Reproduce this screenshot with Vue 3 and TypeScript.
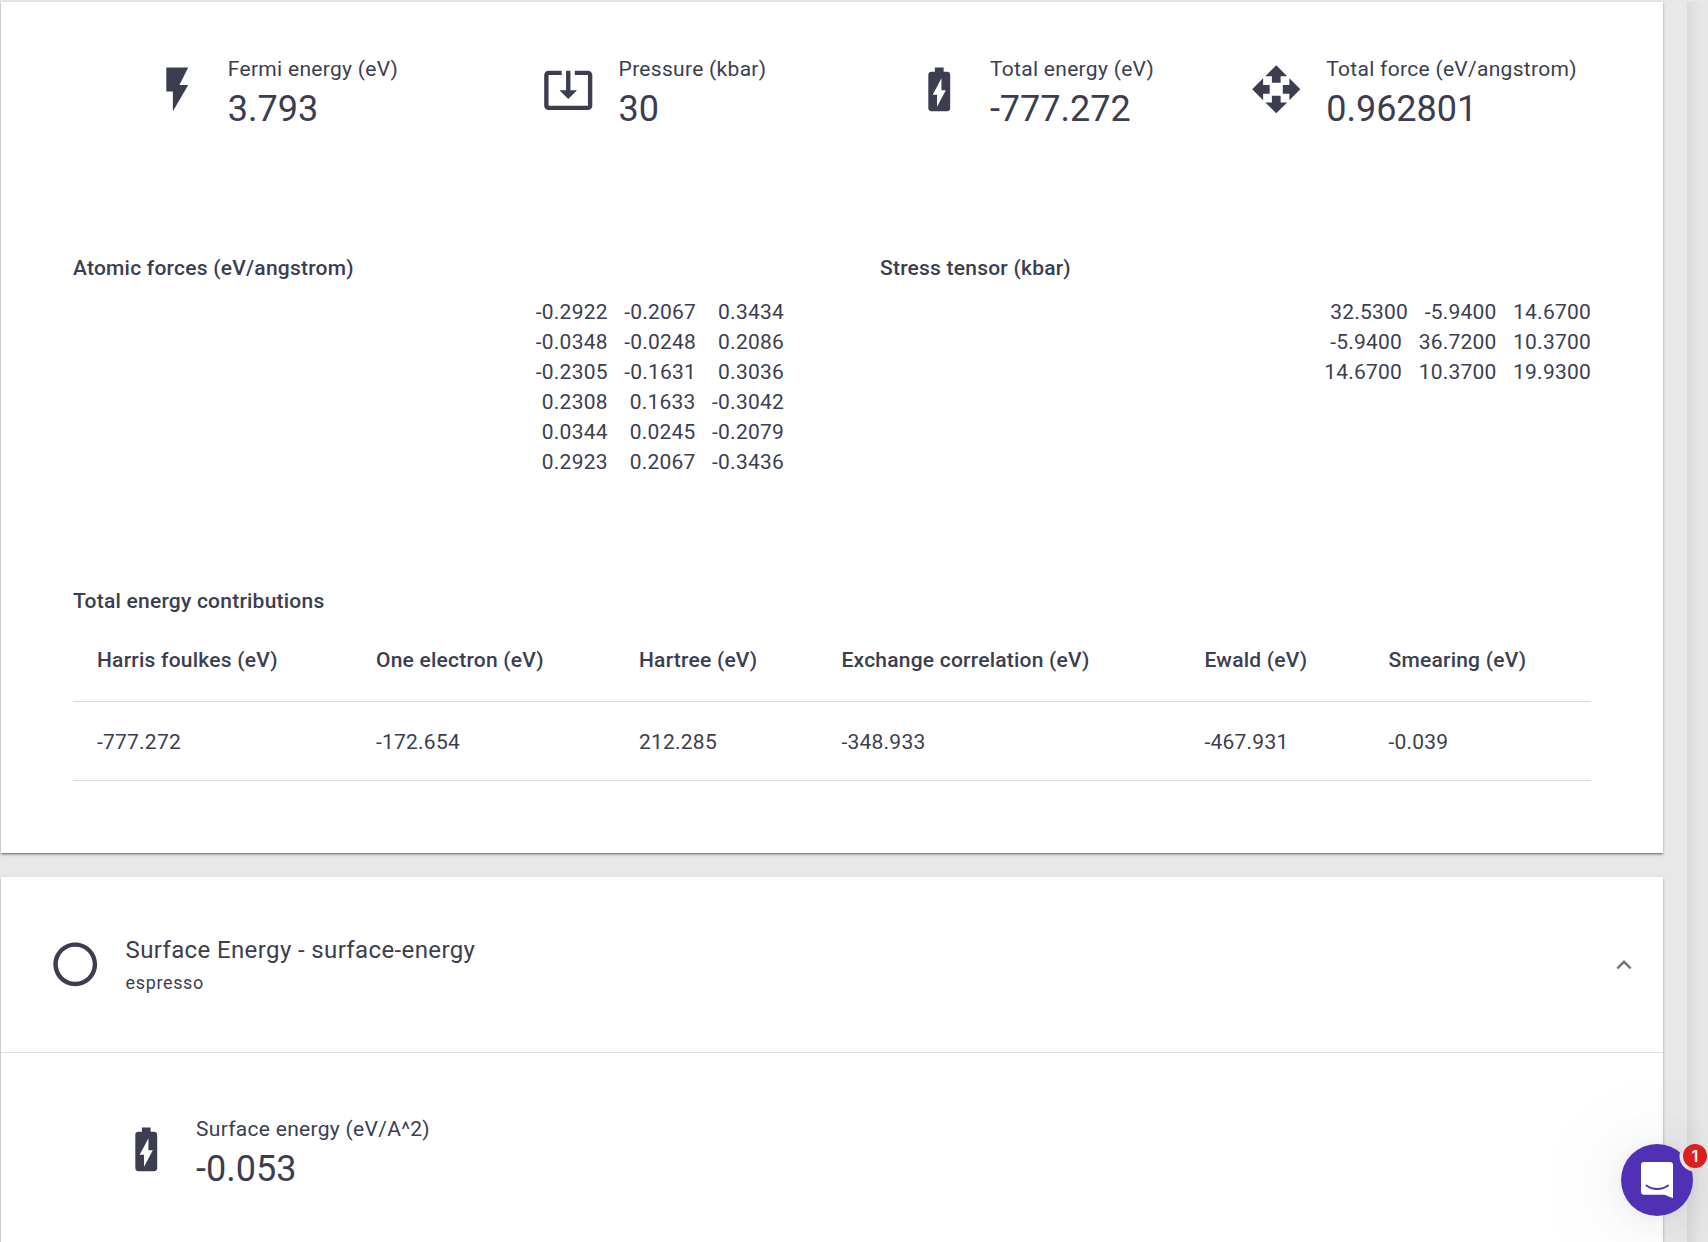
<script setup lang="ts">
interface Stat {
  label: string
  value: string
  icon: string
}

const icons = {
  bolt: 'M7 2v11h3v9l7-12h-4l4-8z',
  pressure:
    'M12 16.5l4-4h-3v-9h-2v9H8l4 4zm9-13h-6v1.99h6v14.03H3V5.49h6V3.5H3c-1.1 0-2 .9-2 2v14c0 1.1.9 2 2 2h18c1.1 0 2-.9 2-2v-14c0-1.1-.9-2-2-2z',
  battery:
    'M15.67 4H14V2h-4v2H8.33C7.6 4 7 4.6 7 5.33v15.33C7 21.4 7.6 22 8.33 22h7.33c.74 0 1.34-.6 1.34-1.33V5.33C17 4.6 16.4 4 15.67 4zM11 20v-5.5H9L13 7v5.5h2L11 20z',
  force:
    'M10 9h4V6h3l-5-5-5 5h3v3zm-1 1H6V7l-5 5 5 5v-3h3v-4zm14 2l-5-5v3h-3v4h3v3l5-5zm-9 3h-4v3H7l5 5 5-5h-3v-3z',
}

const stats: Stat[] = [
  { label: 'Fermi energy (eV)', value: '3.793', icon: icons.bolt },
  { label: 'Pressure (kbar)', value: '30', icon: icons.pressure },
  { label: 'Total energy (eV)', value: '-777.272', icon: icons.battery },
  { label: 'Total force (eV/angstrom)', value: '0.962801', icon: icons.force },
]

const surface: Stat = { label: 'Surface energy (eV/A^2)', value: '-0.053', icon: icons.battery }

const matrices: { title: string; rows: number[][] }[] = [
  {
    title: 'Atomic forces (eV/angstrom)',
    rows: [
      [-0.2922, -0.2067, 0.3434],
      [-0.0348, -0.0248, 0.2086],
      [-0.2305, -0.1631, 0.3036],
      [0.2308, 0.1633, -0.3042],
      [0.0344, 0.0245, -0.2079],
      [0.2923, 0.2067, -0.3436],
    ],
  },
  {
    title: 'Stress tensor (kbar)',
    rows: [
      [32.53, -5.94, 14.67],
      [-5.94, 36.72, 10.37],
      [14.67, 10.37, 19.93],
    ],
  },
]

const contributions: { name: string; value: string }[] = [
  { name: 'Harris foulkes (eV)', value: '-777.272' },
  { name: 'One electron (eV)', value: '-172.654' },
  { name: 'Hartree (eV)', value: '212.285' },
  { name: 'Exchange correlation (eV)', value: '-348.933' },
  { name: 'Ewald (eV)', value: '-467.931' },
  { name: 'Smearing (eV)', value: '-0.039' },
]

const format = (n: number): string => n.toFixed(4).padStart(7, ' ')
</script>

<template>
  <div class="page">
    <main class="units">
      <section class="card results">
        <div class="stats">
          <div v-for="s in stats" :key="s.label" class="stat">
            <svg class="stat-icon" viewBox="0 0 24 24"><path :d="s.icon" /></svg>
            <div>
              <div class="stat-label">{{ s.label }}</div>
              <div class="stat-value">{{ s.value }}</div>
            </div>
          </div>
        </div>

        <div class="matrices">
          <div v-for="m in matrices" :key="m.title" class="matrix">
            <h3 class="heading">{{ m.title }}</h3>
            <div v-for="(row, i) in m.rows" :key="i" class="matrix-row">
              <span v-for="(n, j) in row" :key="j">{{ format(n) }}</span>
            </div>
          </div>
        </div>

        <h3 class="heading">Total energy contributions</h3>
        <table class="contributions">
          <thead>
            <tr><th v-for="c in contributions" :key="c.name">{{ c.name }}</th></tr>
          </thead>
          <tbody>
            <tr><td v-for="c in contributions" :key="c.name">{{ c.value }}</td></tr>
          </tbody>
        </table>
      </section>

      <section class="card">
        <header class="unit-header">
          <svg class="unit-icon" viewBox="0 0 24 24">
            <path d="M12 2C6.48 2 2 6.48 2 12s4.48 10 10 10 10-4.48 10-10S17.52 2 12 2zm0 18c-4.42 0-8-3.58-8-8s3.58-8 8-8 8 3.58 8 8-3.58 8-8 8z" />
          </svg>
          <div class="unit-text">
            <div class="unit-title">Surface Energy - surface-energy</div>
            <div class="unit-sub">espresso</div>
          </div>
          <svg class="chevron" viewBox="0 0 24 24"><path d="M12 8l-6 6 1.41 1.41L12 10.83l4.59 4.58L18 14z" /></svg>
        </header>
        <div class="unit-body">
          <div class="stat">
            <svg class="stat-icon" viewBox="0 0 24 24"><path :d="surface.icon" /></svg>
            <div>
              <div class="stat-label">{{ surface.label }}</div>
              <div class="stat-value">{{ surface.value }}</div>
            </div>
          </div>
        </div>
      </section>
    </main>
    <aside class="side"></aside>

    <button class="launcher" aria-label="Open messenger">
      <svg viewBox="0 0 72 72">
        <defs>
          <mask id="badge-cut">
            <rect width="72" height="72" fill="#fff" />
            <circle cx="74" cy="12" r="15.5" fill="#000" />
          </mask>
        </defs>
        <circle cx="36" cy="36" r="36" fill="#5030b5" mask="url(#badge-cut)" />
        <path d="M23 18h26a3 3 0 0 1 3 3V54.300l-8.500-3.600H23a3 3 0 0 1-3-3V21a3 3 0 0 1 3-3z" fill="#fff" />
        <path d="M25.500 41.500c6 4.600 15.500 4.600 21.500 0" fill="none" stroke="#5030b5" stroke-width="2" stroke-linecap="round" />
      </svg>
      <span class="badge">1</span>
    </button>
  </div>
</template>

<style>
body {
  margin: 0;
  overflow: hidden;
}
</style>

<style scoped>
.page {
  position: relative;
  display: flex;
  gap: 24px;
  width: 1708px;
  height: 1242px;
  overflow: hidden;
  box-sizing: border-box;
  padding: 2px 0 0 1px;
  background: #e8e8e8;
  color: #3c3e50;
  font-family: Roboto, "Liberation Sans", sans-serif;
  font-size: 21px;
  line-height: 30px;
  letter-spacing: 0.225px;
}
.units {
  display: flex;
  flex-direction: column;
  gap: 24px;
  width: 1662px;
  flex: none;
}
.card {
  flex: none;
  box-sizing: border-box;
  background: #fff;
  box-shadow: 0 1px 0 rgba(0, 0, 0, 0.22), 0 2px 2px rgba(0, 0, 0, 0.2), 0 1px 3px rgba(0, 0, 0, 0.16);
}
.results {
  height: 851px;
  padding: 52px 72px 0;
}
.stats {
  display: grid;
  grid-template-columns: repeat(4, 1fr);
  margin: 0 -12px 0 12px;
}
.stat {
  display: flex;
  justify-content: center;
  gap: 24px;
}
.stat-icon {
  width: 52.5px;
  height: 52.5px;
  margin-top: 9px;
  fill: #3c3e50;
}
.stat-label {
  letter-spacing: 0.3px;
}
.stat-value {
  font-size: 36px;
  line-height: 50px;
  letter-spacing: 0;
}
.heading {
  margin: 0;
  font-size: 21px;
  font-weight: 500;
  line-height: 30px;
}
.matrices {
  display: grid;
  grid-template-columns: 1fr 1fr;
  gap: 96px;
  margin: 119px 0 109px;
}
.matrix .heading {
  margin-bottom: 14px;
}
.matrix-row {
  display: flex;
  justify-content: flex-end;
  gap: 16.5px;
  white-space: pre;
}
.contributions {
  width: 100%;
  margin-top: 2px;
  table-layout: fixed;
  border-collapse: collapse;
  text-align: left;
}
.contributions th,
.contributions td {
  border-bottom: 1px solid #dadada;
  white-space: nowrap;
}
.contributions th {
  padding: 24px 24px 23px;
  font-weight: 500;
  line-height: 36px;
}
.contributions td {
  padding: 25px 24px 23px;
}
.contributions th:nth-child(1) { width: 231px; }
.contributions th:nth-child(2) { width: 215px; }
.contributions th:nth-child(3) { width: 154.5px; }
.contributions th:nth-child(4) { width: 315px; }
.contributions th:nth-child(5) { width: 136px; }
.unit-header {
  display: flex;
  align-items: center;
  box-sizing: border-box;
  height: 176px;
  padding: 0 24px 0 48px;
  border-bottom: 1px solid #e0e0e0;
}
.unit-icon {
  width: 52.5px;
  height: 52.5px;
  fill: #3c3e50;
}
.unit-text {
  flex: 1;
  margin-left: 24px;
}
.unit-title {
  font-size: 24px;
  line-height: 36px;
  letter-spacing: 0.38px;
}
.unit-sub {
  font-size: 18px;
  line-height: 30px;
  letter-spacing: 0.65px;
}
.chevron {
  width: 30px;
  height: 30px;
  fill: #757575;
}
.unit-body {
  display: flex;
  height: 190px;
  padding: 61px 0 0 118.5px;
}
.side {
  flex: 1;
  background: linear-gradient(90deg, #dadada, #e7e7e7 14px);
}
.launcher {
  position: absolute;
  left: 1621px;
  top: 1144px;
  width: 72px;
  height: 72px;
  padding: 0;
  border: 0;
  border-radius: 50%;
  background: none;
  box-shadow: 0 1.5px 9px rgba(0, 0, 0, 0.03), 0 3px 48px rgba(0, 0, 0, 0.08), 0 8px 120px 10px rgba(0, 0, 0, 0.06);
}
.launcher svg {
  display: block;
  width: 72px;
  height: 72px;
}
.badge {
  position: absolute;
  left: 62px;
  top: 0;
  width: 24px;
  height: 24px;
  border-radius: 50%;
  background: #dc1f1f;
  color: #fff;
  font: 600 16px/24px Inter, "Liberation Sans", sans-serif;
  text-align: center;
}
</style>
